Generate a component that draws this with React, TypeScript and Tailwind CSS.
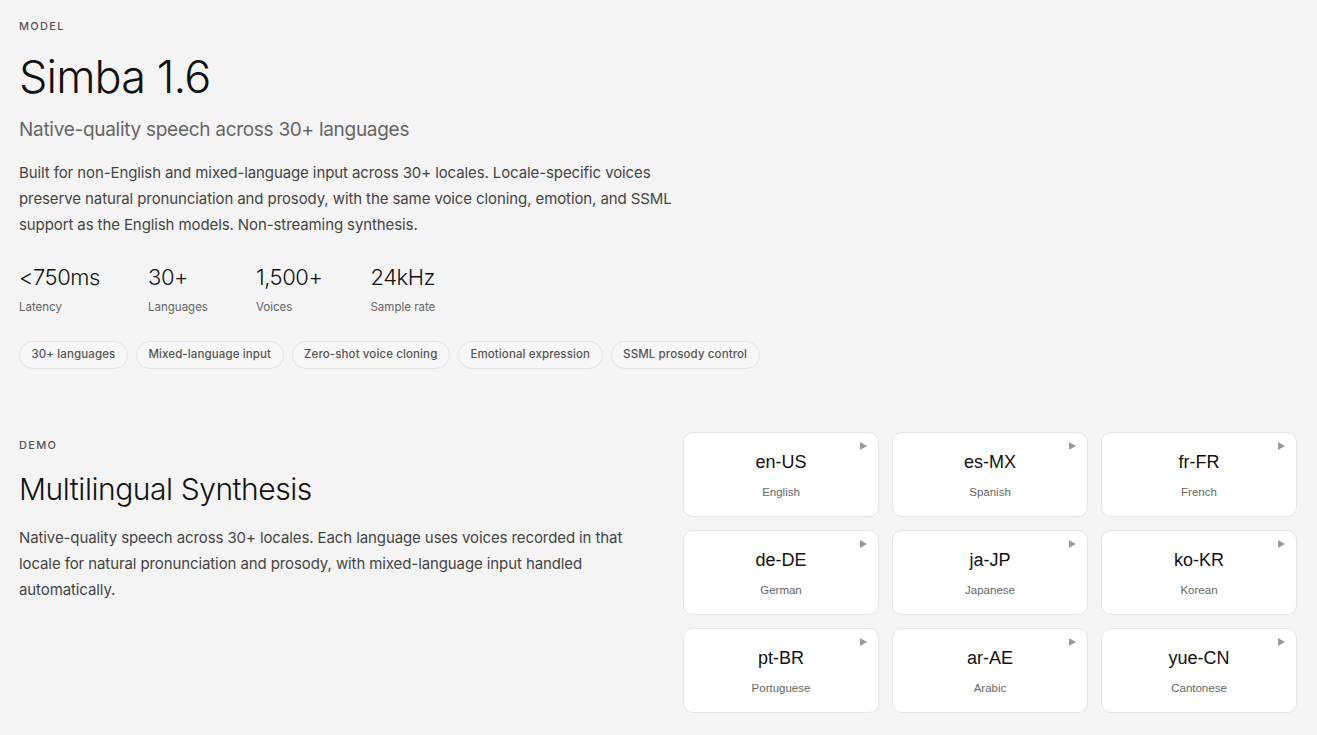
const stats = [
  { value: '<750ms', label: 'Latency' },
  { value: '30+', label: 'Languages' },
  { value: '1,500+', label: 'Voices' },
  { value: '24kHz', label: 'Sample rate' },
]

const features = [
  '30+ languages',
  'Mixed-language input',
  'Zero-shot voice cloning',
  'Emotional expression',
  'SSML prosody control',
]

const locales = [
  { code: 'en-US', name: 'English' },
  { code: 'es-MX', name: 'Spanish' },
  { code: 'fr-FR', name: 'French' },
  { code: 'de-DE', name: 'German' },
  { code: 'ja-JP', name: 'Japanese' },
  { code: 'ko-KR', name: 'Korean' },
  { code: 'pt-BR', name: 'Portuguese' },
  { code: 'ar-AE', name: 'Arabic' },
  { code: 'yue-CN', name: 'Cantonese' },
]

const LocaleCard = ({ code, name }: { code: string; name: string }) => (
  <button className="relative flex h-[85px] flex-col items-center justify-center rounded-[10px] border border-[#e4e4e4] bg-white">
    <svg className="absolute top-[9px] right-[11px] h-[8px] w-[7px]" viewBox="0 0 7 8">
      <path d="M0 0 L7 4 L0 8 Z" fill="#9a9a9a" />
    </svg>
    <span className="mt-[4px] text-[18px] leading-none text-[#111] [font-family:'Liberation_Sans',Arial,sans-serif]">
      {code}
    </span>
    <span className="mt-[16px] text-[11.5px] leading-none text-[#666] [font-family:'Liberation_Sans',Arial,sans-serif]">
      {name}
    </span>
  </button>
)

export default function App() {
  return (
    <div className="min-h-screen bg-[#f4f4f4] pt-[21px] pr-5 pb-5 pl-[19px] text-[#111] [font-family:Inter,sans-serif]">
      <section>
        <p className="text-[11px] leading-none font-medium tracking-[0.12em] text-[#555]">MODEL</p>
        <h1 className="mt-[22px] text-[45px] leading-none font-light tracking-[-0.02em]">Simba 1.6</h1>
        <p className="mt-[21px] text-[19px] leading-none tracking-[-0.015em] text-[#666]">
          Native-quality speech across 30+ languages
        </p>
        <p className="mt-[21px] max-w-[680px] text-[15px] leading-[26px] tracking-[-0.1px] text-[#444]">
          Built for non-English and mixed-language input across 30+ locales. Locale-specific voices
          preserve natural pronunciation and prosody, with the same voice cloning, emotion, and SSML
          support as the English models. Non-streaming synthesis.
        </p>

        <div className="mt-[28px] flex gap-12">
          {stats.map((s) => (
            <div key={s.label}>
              <div className="text-[22px] leading-none font-light tracking-[-0.02em]">{s.value}</div>
              <div className="mt-[14px] text-[11.5px] leading-none text-[#666]">{s.label}</div>
            </div>
          ))}
        </div>

        <div className="mt-[27px] flex gap-[8px]">
          {features.map((f) => (
            <span
              key={f}
              className="flex h-[28px] items-center rounded-full border border-[#e2e2e2] bg-[#f7f7f7] px-[11.5px] text-[11.5px] font-medium tracking-[0.01em] text-[#555]"
            >
              {f}
            </span>
          ))}
        </div>
      </section>

      <section className="mt-[63px] flex justify-between">
        <div className="pt-[8px]">
          <p className="text-[11px] leading-none font-medium tracking-[0.12em] text-[#555]">DEMO</p>
          <h2 className="mt-[23px] text-[30px] leading-none font-light tracking-[-0.015em]">
            Multilingual Synthesis
          </h2>
          <p className="mt-[21px] max-w-[620px] text-[15px] leading-[26px] tracking-[-0.1px] text-[#444]">
            Native-quality speech across 30+ locales. Each language uses voices recorded in that
            locale for natural pronunciation and prosody, with mixed-language input handled
            automatically.
          </p>
        </div>

        <div className="grid w-[614px] grid-cols-3 gap-x-[13px] gap-y-[13px]">
          {locales.map((l) => (
            <LocaleCard key={l.code} code={l.code} name={l.name} />
          ))}
        </div>
      </section>
    </div>
  )
}
